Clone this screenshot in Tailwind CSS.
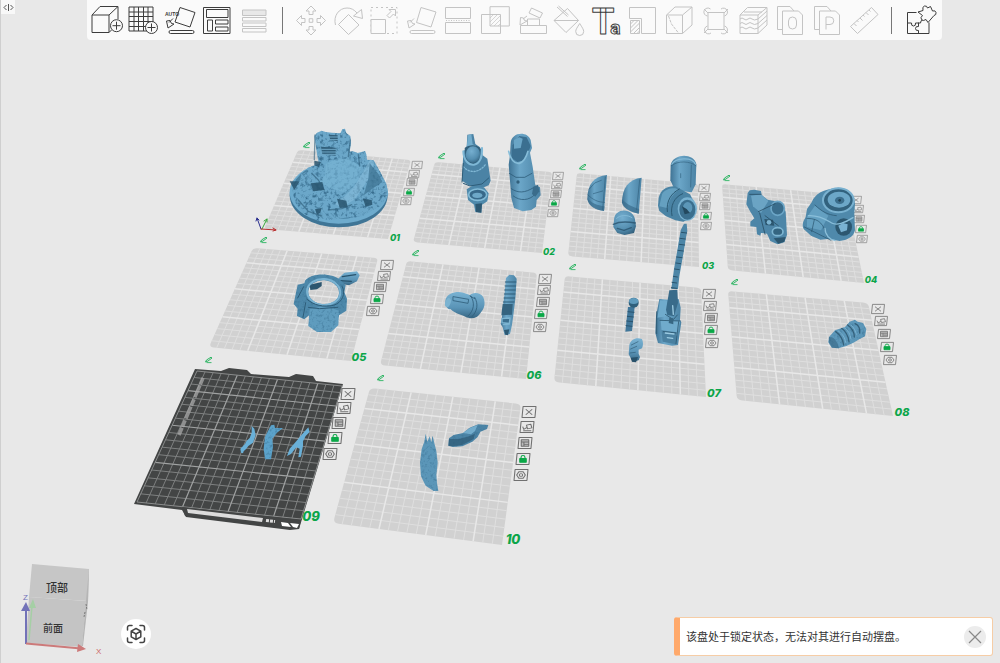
<!DOCTYPE html>
<html lang="zh-CN">
<head>
<meta charset="utf-8">
<meta name="viewport" content="width=device-width, initial-scale=1">
<title>构建板视图</title>
<script src="https://cdn.jsdelivr.net/npm/@tailwindcss/browser@4"></script>
</head>
<body class="font-['Noto_Sans','Noto_Sans_CJK_SC',sans-serif]">
<main class="relative flex min-h-screen flex-col overflow-hidden border-l border-[#cfcfcf] bg-[#e8e8e8]">

  <!-- 3D canvas -->
  <section id="scene" class="absolute inset-y-0 -left-px right-0" aria-label="3D 场景">
    <svg class="absolute left-0 top-0" width="1000" height="663" viewBox="0 0 1000 663" aria-hidden="true">
      <g id="plates"></g>
    </svg>
    <div id="plate-controls"></div>
    <svg class="pointer-events-none absolute left-0 top-0" width="1000" height="663" viewBox="0 0 1000 663" stroke-linejoin="round" stroke-linecap="round" aria-hidden="true">
      <defs>
        <linearGradient id="lr"><stop offset="0" stop-color="#3f7394"/><stop offset=".35" stop-color="#6ba6c8"/><stop offset="1" stop-color="#4b83a5"/></linearGradient>
        <linearGradient id="tb" x2="0" y2="1"><stop offset="0" stop-color="#79b2d2"/><stop offset=".6" stop-color="#5a94b7"/><stop offset="1" stop-color="#376683"/></linearGradient>
        <radialGradient id="ball" cx=".4" cy=".3" r=".8"><stop offset="0" stop-color="#76afd0"/><stop offset=".6" stop-color="#548eb0"/><stop offset="1" stop-color="#2f5b77"/></radialGradient>
        <filter id="rock" x="0" y="0" width="1" height="1" color-interpolation-filters="sRGB">
          <feTurbulence type="fractalNoise" baseFrequency=".09" numOctaves="3" seed="4"/>
          <feColorMatrix values="0 0 0 0 .22  0 0 0 0 .43  0 0 0 0 .56  3 0 0 0 -1.45"/>
          <feComposite in2="SourceGraphic" operator="in" result="n"/>
          <feMerge><feMergeNode in="SourceGraphic"/><feMergeNode in="n"/></feMerge>
        </filter>
        <filter id="grain" x="0" y="0" width="1" height="1" color-interpolation-filters="sRGB">
          <feTurbulence type="fractalNoise" baseFrequency=".12" numOctaves="2" seed="9"/>
          <feColorMatrix values="0 0 0 0 .22  0 0 0 0 .43  0 0 0 0 .56  1.600 0 0 0 -.8"/>
          <feComposite in2="SourceGraphic" operator="in" result="n"/>
          <feMerge><feMergeNode in="SourceGraphic"/><feMergeNode in="n"/></feMerge>
        </filter>
      </defs>

      <g transform="translate(205 120) scale(.33333)">
        <!-- scenic base -->
        <ellipse cx="401" cy="226" rx="147" ry="96" fill="#3f7596"/>
        <ellipse cx="401" cy="217" rx="147" ry="94" fill="#6eabcd"/>
        <ellipse cx="401" cy="211" rx="138" ry="86" fill="#477f9f"/>
        <g filter="url(#rock)">
          <path fill="#6ba7c9" d="M328 48l8-10 14-6 12 4 18 2 26 2 6-12 8-2 4 14 12 8 2 22-4 25 10-1 14 5 22-6 4 10 2 16 20 2 10 18 10 18 18 34 6 32-22 34-26 14-26 16-30 6-26 0-30 6-22 0-20-4-8 8-18-14-18-4-14-10-18-26-6-20-4-20 0-8 12-14 12-6 2-18 14-6 6-14 16-4 18-6-6-30z"/>
        </g>
        <path fill="#7ab5d5" d="M362 132l30-14 40 0 36 22-4 34-30 34-20 8-36-10-34-20 16-20z" opacity=".6"/>
        <path fill="#8bc0dc" d="M478 150l18-32 12 10-18 50-40 60-40 24-20-10 26-20 30-30z" opacity=".55"/>
        <path fill="#3f7493" d="M494 130l28 34 10 22-32 22-24 18 14-50z" opacity=".75"/>
        <path fill="#28536d" d="M372 44l26 2v18l-22-4zM348 80l44 3v24l-40-4zM328 122l20 4-6 16-14-6zM318 190l34-4 6 24-34 4zM396 236l28 6 4 20-24 2zM474 236l26 4 2 14-20 6zM254 184l30 0-16 26zM330 268l20-4-4 14-10 6z" opacity=".85"/>
        <path stroke="#6fa9c8" stroke-width="3" d="M350 88h44M350 96h44M351 103h42M366 51h34M367 59h31"/>
        <path stroke="#2d5c78" stroke-width="4" fill="none" d="M330 45l-2 74M436 60l-6 50M280 240l30 34 40 14M440 254l-30 12-40 4M460 104l4 34M320 160l20 20 18 30" opacity=".6"/>

        <!-- collar ring -->
        <path fill="url(#tb)" d="M398 478l20-20 38-4 8 12-8 18-24 12-22-4z"/>
        <path stroke="#28536d" stroke-width="4" fill="none" d="M412 470l40-6M405 482l34 2"/>
        <g filter="url(#grain)">
        <path fill="#4d88aa" fill-rule="evenodd" d="M300 482c20-26 86-24 108 0l14 14-4 20 8 20-2 36-22 14-6 20-80 0-4-20-14 12-22-10 2-22-12-14 6-30 6-28 20-4zM310 514a46 36 5 0 0 92 6a46 36 5 0 0-92-6z"/>
        <path fill="#5f9cbe" d="M314 568l30-8 36 4 22 8-2 44-22 20-42 0-26-18z"/>
        </g>
        <path fill="#2c566f" d="M314 494l36-8 0 12-14 10-20 2z"/>
        <ellipse cx="356" cy="516" rx="50" ry="39" stroke="#7ab3d2" stroke-width="6" fill="none" transform="rotate(5 356 516)"/>
        <path stroke="#2d5c78" stroke-width="3" fill="none" d="M296 500l-18 34M302 548l-8 44M412 500c10 20 2 46-26 56-30 6-60 0-80-18M310 562l34 4 54-4"/>
      </g>

      <g transform="translate(380 120) scale(.33333)">
        <!-- boots -->
        <path fill="#4b83a5" d="M262 44l18-2 6 30 14 10 8 24 14 10 10 66-6 14-20 8-24-2-16-6-20-14 4-86 10-16z"/>
        <path fill="#73adcd" d="M264 46l10-3 4 30 18 8-20 8-16-8z"/>
        <path fill="#315f7b" d="M254 84c14-12 42-10 48 4l-4 32-22 16-18-14z"/>
        <ellipse cx="279" cy="104" rx="22" ry="25" fill="url(#ball)"/>
        <path stroke="#7fb8d6" stroke-width="6" fill="none" d="M250 94c0 26 16 42 32 40s26-22 24-50"/>
        <path stroke="#80b7d4" stroke-width="4" fill="none" stroke-dasharray="4 5" d="M250 140c20 22 48 18 66-6"/>
        <path stroke="#2d5c78" stroke-width="3" fill="none" d="M250 190l20 8 36-6 20-18M250 130l-4 56"/>
        <path fill="#4f89ab" d="M260 208l16-10 36 4 14 18-4 24-16 10-2 24-18-2-4-22-18-14z"/>
        <ellipse cx="293" cy="224" rx="27" ry="17" fill="#38698a" stroke="#83bbd7" stroke-width="5"/>
        <ellipse cx="292" cy="226" rx="15" ry="8" fill="#6ea8c8"/>
        <path fill="#2d5872" d="M286 252l20-2-2 28-16-2z"/>
        <path fill="url(#lr)" d="M392 70c2-34 50-38 60-10l4 24-6 14 8 42 8 56 14 6 2 24-12 14-2 20-14 10-26 4-26-10-8-30-2-26-6-74 4-28z"/>
        <path fill="#3b6f90" d="M396 92l2-16 20-28 22 4 12 26-8 22-14 22-18 4-16-12z"/>
        <path fill="#6aa5c6" d="M402 60l16-8 10 4-6 28-20 2z"/>
        <path stroke="#86bdd9" stroke-width="5" fill="none" d="M386 94c6 24 18 38 32 36 14-4 22-22 26-36"/>
        <path stroke="#2d5c78" stroke-width="3" fill="none" d="M388 160l20 12 26 0 22-12M394 206c20 14 40 14 68-4M400 228c20 16 48 14 64-4" opacity=".8"/>
        <circle cx="414" cy="186" r="5" fill="#315f7b"/><path fill="#3a6c8b" d="M460 200l14-6 4 20-12 16-10-8z"/>

        <!-- forearm -->
        <path fill="url(#tb)" d="M196 548c-2-16 12-30 34-32 18 0 28 4 40 10 4-8 30-12 40 6 8 20 2 36-8 46-10 18-30 20-46 12-16-6-34-12-44-22-10 0-14-8-16-20z"/>
        <ellipse cx="204" cy="548" rx="8" ry="14" fill="#7bb3d1" transform="rotate(20 204 548)"/>
        <path stroke="#2d5c78" stroke-width="3" fill="none" d="M220 530l46 8-2 12-44-8zM272 528c14 20 10 44-8 60M284 532c12 20 8 42-8 58M270 528l14 8" opacity=".8"/>
        <!-- pistol grip -->
        <path fill="url(#lr)" d="M378 474l10-10 14 2 8 10-4 60-6 50-4 28-6 28-16 4-6-24-6-10 4-22 4-40 4-30z"/>
        <path stroke="#2d5c78" stroke-width="3" d="M376 486h32M375 498h32M374 510h32M373 522h32M372 534h32M370 546h32"/>
        <path fill="#34637f" d="M368 552h30l-2 32-32 2z"/><path stroke="#7db5d2" stroke-width="4" fill="#3b6f8f" d="M366 596l24-2-2 16-22-2zM370 614l18-2"/>
        <path fill="#2d5973" d="M372 630l16-2-4 18-8-2z"/>
      </g>

      <g transform="translate(550 145) scale(.33333)">
        <!-- half domes -->
        <path fill="url(#lr)" d="M171 90l-9 108c-16-2-46-12-50-36 0-44 20-68 59-72z"/>
        <path fill="#3a6c8b" d="M112 160c12 14 30 22 52 24l-2 14c-26-2-48-14-50-38z" opacity=".7"/>
        <path stroke="#2d5c78" stroke-width="3" fill="none" d="M118 132l16-18 20-8M130 146l28-8M114 150c14 14 30 22 50 22M166 96l-8 98" opacity=".6"/>
        <path fill="url(#lr)" d="M275 98l-9 108c-20-4-44-14-50-34 0-42 20-70 59-74z"/>
        <path fill="#3a6c8b" d="M216 162c14 16 30 24 52 30l-2 14c-20-4-46-14-50-32z" opacity=".7"/>
        <path stroke="#2d5c78" stroke-width="3" fill="none" d="M269 104l-9 90" opacity=".6"/>
        <!-- knee cap -->
        <path fill="url(#ball)" d="M192 226c0-40 62-40 64 4l2 14-6 20-28 6-22-6-12-18z"/>
        <path stroke="#2a546e" stroke-width="4" fill="none" d="M190 238c20-10 44-8 66-4M202 250l20 6 22-8" opacity=".8"/>
        <path stroke="#82b9d6" stroke-width="3" fill="none" d="M200 220c10-10 32-12 46-2"/>
        <!-- shoulder and arm -->
        <path fill="url(#lr)" d="M362 60c4-20 24-28 40-28s34 8 37 26l-2 60-12 24-50-6-14-30z"/>
        <path stroke="#82b9d6" stroke-width="4" fill="none" d="M366 58c8-20 62-24 70 0"/>
        <path stroke="#2d5c78" stroke-width="3" fill="none" d="M364 62c20-16 56-14 74 0M424 60l-2 66M392 86v12" opacity=".6"/>
        <path fill="#4a83a4" d="M326 158c6-26 28-36 50-34l44 24 18 34-6 34-32 14-24-4-28-12-20-16-4-16z"/>
        <path fill="#71accc" d="M336 148c10-20 42-22 50-14-20 14-32 36-32 56l-26-6z" opacity=".7"/>
        <path stroke="#2b5973" stroke-width="3" fill="none" d="M352 200c-4-32 12-56 36-68M366 212c-6-28 6-56 32-66"/>
        <ellipse cx="412" cy="192" rx="29" ry="35" fill="#79b2d1"/>
        <ellipse cx="412" cy="194" rx="24" ry="30" fill="#3b6f8e"/>
        <ellipse cx="413" cy="188" rx="14" ry="17" fill="#5c97b8"/><path fill="#23495f" d="M396 184l14 8 10 12-16 4z"/>
        <!-- thunder hammer -->
        <path fill="#4d86a7" d="M402 236h8l2 22-4 20-8 48-12 68-4 38-20 0 8-60 10-56 10-60z"/>
        <path stroke="#2a546d" stroke-width="3" d="M394 262l16 2M390 280l16 2M388 298l16 2M384 316l16 2M380 336l16 2M378 354l14 2M374 372l14 2M370 394l12 2M366 412l14 2M364 428l16 2"/>
        <path fill="url(#lr)" d="M328 462l28 2 30-2 6 26-2 36 4 8-10 68-18 2-42-8-8-30 2-50z"/>
        <path fill="#70abcc" d="M330 466l22 2-2 46-28 4 4-24zM332 526l58 2-8 44-46-4z"/>
        <path fill="#396b8a" d="M358 436l24-2 2 40-12 40-20-4-4-16z"/>
        <path fill="#4a80a0" d="M334 556l46 6-2 36-40-8z"/>
        <path stroke="#2a546d" stroke-width="3" fill="none" d="M320 500v66M330 526l60 2M386 530l-8 66M346 508l24 16 12-14M340 560l38 4" opacity=".8"/>
        <path stroke="#9ccbe2" stroke-width="4" d="M368 482l2 26M346 564l26 3M352 578l16 2"/>
        <path fill="#376783" d="M358 518l12 2v18l-14-4z"/>
        <!-- handle -->
        <path fill="#41779a" d="M234 486h20l-8 72-20 2z"/>
        <path stroke="#2a546d" stroke-width="3" d="M234 500l18 2M232 514l18 2M230 528l18 2M228 542l18 2"/>
        <ellipse cx="251" cy="473" rx="15" ry="15" fill="#30607c"/><ellipse cx="251" cy="468" rx="14" ry="9" fill="#5f9bbd"/>
        <!-- hand -->
        <path fill="url(#tb)" d="M238 600c4-18 22-24 38-18 4 10 4 18 0 28l-10 4 0 12 4 10-4 10-18 4-12-22z"/>
        <path stroke="#2a546d" stroke-width="3" fill="none" d="M244 600l20-10M242 612l18-8M240 624l16-2" opacity=".6"/>
        <path fill="#28516a" d="M242 638l22-2-6 16-12-2z"/>
      </g>

      <g transform="translate(715 165) scale(.33333)">
        <!-- chest cannon -->
        <path fill="#4d86a8" d="M98 84l6-8 14-2 20 4 2 12 18 14 20 4 22 8 12 24 4 70-8 22-20 6-22-10-10-22-18-2-2 8-10-4-2-22-18-2v-14l12-10-12-20-12-22z"/>
        <path fill="#75aecd" d="M108 92l30-4 22 20-22 36-24-20z" opacity=".75"/>
        <ellipse cx="188" cy="130" rx="20" ry="21" fill="#3a6d8c" stroke="#6ca6c7" stroke-width="5"/>
        <ellipse cx="188" cy="200" rx="16" ry="12" fill="#346581" stroke="#7db5d2" stroke-width="5"/>
        <path fill="#2c5770" d="M176 220l36-4-4 14-18 6zM148 162l26 2 4 18-26-2z"/>
        <path stroke="#24495e" stroke-width="3" fill="none" d="M104 88l34 0M130 140l50-24M134 144l16 64M150 152l40 30" opacity=".75"/>
        <circle cx="162" cy="172" r="7" fill="#7bb3d1"/>
        <!-- torso -->
        <path fill="#4f89ab" d="M290 112c10-26 34-40 80-44 30 0 48 22 50 48l-2 30 2 50c-4 20-24 30-46 32l-34-6-24 2-28-12-22-20c-6-12-2-22 6-36l4-24z"/>
        <path fill="#6ea9ca" d="M276 156l24-34 40 30-22 44-42-10z" opacity=".7"/>
        <ellipse cx="370" cy="106" rx="46" ry="36" fill="#32627e" stroke="#79b1d0" stroke-width="6"/>
        <ellipse cx="372" cy="104" rx="34" ry="24" fill="#6ca7c8"/><ellipse cx="374" cy="106" rx="14" ry="11" fill="#3b6e8d"/><circle cx="374" cy="106" r="4" fill="#1f4256"/>
        <ellipse cx="386" cy="186" rx="25" ry="26" fill="#2c5770"/><path fill="#79b2d2" d="M370 182l14-8 14 4-2 18-18 6z"/>
        <path stroke="#2a546e" stroke-width="3" fill="none" d="M276 160c40 0 50 20 60 54M268 186l60 30 20 10M300 120c20 20 40 30 64 32M290 200l8-36" opacity=".7"/>
        <path stroke="#8abfda" stroke-width="4" fill="none" d="M280 152c36-2 56 14 70 22s40 0 64-16M330 190c0 20 14 34 30 36"/>
        <!-- greave -->
        <g filter="url(#grain)"><path fill="#5c97b9" d="M342 516l18-20 30-10 14-16 16-6 8 6 16 4 10 18-4 22-16 8-20 12-22 10-22 6-20-2-10-16z"/></g>
        <path fill="#376883" d="M342 516c12-2 26 12 30 34l-20-2-10-16z" opacity=".6"/>
        <path stroke="#24495f" stroke-width="4" fill="none" d="M362 500c14 10 22 26 24 40M380 490c14 10 20 26 22 40M398 480c14 10 20 26 20 36M420 476c12 4 16 18 14 28" opacity=".7"/>
        <path stroke="#86bcd8" stroke-width="3" fill="none" d="M370 498c12 8 20 20 22 34M388 488c12 8 18 20 20 34M408 480c10 8 14 20 16 28" opacity=".7"/>
      </g>

      <!-- shards on the active plate -->
      <g transform="translate(125 350) scale(.33333)">
        <path fill="#69b0d8" d="M380 228l8 8 4 20-8 22-14 10-6 8-8 8-2 6-6-2-2-12 14-14 4-8 10-10 6-16z"/>
        <path fill="#69b0d8" d="M550 232l4 14-12 12-8 16 0 14-6 32-8 2 4-26-10-4-16 20-12 6 8-22 16-18 22-26z"/>
        <g filter="url(#grain)"><path fill="#5ba2ca" d="M438 226l10-2 2 10 24 0-18 14-14 18 2 24-6 38-18 0-4-32 4-36z"/></g>
      </g>
      <g transform="translate(325 365) scale(.33333)">
        <g filter="url(#grain)">
          <path fill="#5b96b8" d="M302 206l5 24 7-16 5 18 4-20 5 22 6 24 4 36-4 36 2 24 4 24-14 0-24-16-14-28-3-40 5-42 8-22z"/>
          <path fill="#4b84a6" d="M372 220l14-10 28-6 20-16 26-10 30 2-4 12-20 8-8 16-16 14-30 14-28 2-14-4z"/>
        </g>
        <path fill="#28526c" d="M372 222l30 0 30-8 18-8-4 16-34 18-30 4-12-2z" opacity=".6"/>
        <path fill="#7db7d6" d="M414 204l22-16 22-8-8 18-12 10z" opacity=".8"/>
      </g>

      <!-- origin axes -->
      <g fill="none" stroke-width="1"><path stroke="#2b2f8f" d="M261 229l-4-11m-1 3l1-3 2 2"/><path stroke="#37a53a" d="M262 229l5-10m-3 2l3-2 0 3"/><path stroke="#b92d2d" d="M261 229l15 1m-3-2l3 2-3 1"/></g>
    </svg>
  </section>

  <!-- Sidebar handle -->
  <button class="absolute left-0 top-0 flex h-3.5 w-3.5 items-center justify-center bg-[#f8f8f8] text-[#555]" aria-label="展开侧栏">
    <svg width="11" height="9" viewBox="0 0 11 9" fill="none" stroke="currentColor"><path d="M3.500 2L1 4.500 3.500 7M5.500 1v7M7.500 2L10 4.500 7.500 7"/></svg>
  </button>

  <!-- Toolbar -->
  <header class="relative ml-[86px] w-full max-w-[855px]">
    <nav id="toolbar" class="flex h-[40px] items-center justify-between rounded-b-sm bg-[#fafafa] pl-[3px] pr-[5px]" aria-label="工具栏"></nav>
  </header>

  <!-- Bottom row -->
  <footer class="relative mt-auto flex items-end justify-between pb-[7px] pr-[7px]">
    <div class="flex items-end gap-1">
      <svg class="-mb-1 ml-4" width="100" height="100" viewBox="17 560 100 100" role="img" aria-label="视图方向">
        <path fill="#c6c6c6" d="M32 564l57 5-1 32-59-4z"/><path fill="#c4c4c4" d="M29 597l57 4-4 46-56-4z"/><path fill="#b5b5b5" d="M89 569l-1 33-5 44-1 0 4-46z"/>
        <path stroke="#777" stroke-width="1" fill="none" d="M86 604l1 6M85 612l-1 5" stroke-dasharray="2 1"/>
        <g fill="#333" font-family="Noto Sans CJK SC, sans-serif" font-size="11" font-weight="500">
          <text x="46" y="592">顶部</text><text x="43" y="632" font-size="10">前面</text>
        </g>
        <path stroke="#a5cfa5" stroke-width="1.500" d="M29 640l3-34"/><path fill="#a5cfa5" d="M29 608l4-9 3 9z"/>
        <path stroke="#7272b8" stroke-width="2" d="M26 644v-36"/><path fill="#7272b8" d="M21 611l5-9 4 9z"/>
        <path stroke="#cc7a7a" stroke-width="2" d="M26 643.500l55 5"/><path fill="#cc7a7a" d="M78 644l8 5-9 3z"/>
        <text x="23" y="600" font-family="Liberation Sans" font-size="8" fill="#7272b8">Z</text>
        <text x="96" y="654" font-family="Liberation Sans" font-size="8" fill="#cc6666">X</text>
      </svg>
      <button class="mb-[7px] flex size-[30px] items-center justify-center rounded-full bg-white text-[#444]" aria-label="重置视角">
        <svg width="20" height="20" viewBox="0 0 20 20" fill="none" stroke="currentColor" stroke-width="1.500" stroke-linejoin="round" stroke-linecap="round"><path d="M1.500 6V3.500a2 2 0 012-2H6M14 1.500h2.500a2 2 0 012 2V6M18.500 14v2.500a2 2 0 01-2 2H14M6 18.500H3.500a2 2 0 01-2-2V14M10 4.500l4.800 2.700v5.600L10 15.500l-4.800-2.700V7.200zM5.200 7.200L10 10l4.800-2.800M10 10v5.500"/></svg>
      </button>
    </div>
    <div role="alert" class="flex h-[39px] w-[319px] items-center justify-between rounded-[3px] border border-l-[6px] border-[#f6cda6] border-l-[#ffa96b] bg-white px-1.5">
      <p class="text-[11px] leading-4 whitespace-nowrap text-[#333]">该盘处于锁定状态，无法对其进行自动摆盘。</p>
      <button class="flex size-[22px] items-center justify-center rounded-full bg-[#ececec] text-[#888]" aria-label="关闭">
        <svg width="14" height="14" viewBox="0 0 14 14" stroke="currentColor" stroke-width="1.200"><path d="M1 1l12 12M13 1L1 13"/></svg>
      </button>
    </div>
  </footer>
</main>

<script>
const HATCH = '<path stroke-width=".7" d="M12 15l4-4M12 19l8-8M12 23l11-11M16 23l7-7M20 23l3-3"/>';
// [label, state, drawing]
const tools = [
  ['添加', 1, '<path d="M2 12h17v17.500H2zM2 12l8-8.500h18L19 12M28 3.500V16M19 29.500l2.500-2.500"/><circle cx="26.500" cy="22.700" r="6" fill="#fafafa"/><path d="M22.500 22.700h8M26.500 18.700v8"/>'],
  ['添加盘', 1, '<path d="M3 4h24v24H3zM8 4v24M12.500 4v24M17.500 4v24M22 4v24M3 9h24M3 13.500h24M3 18.500h24M3 23.500h24"/><circle cx="25.500" cy="24.500" r="6" fill="#fafafa"/><path d="M21.500 24.500h8M25.500 20.500v8"/>'],
  ['自动朝向', 1, '<path d="M17 4.500l15 5-5 14.500-15-5zM10 15.500l-4 4M3.500 18l1.500 7 6-4-2.500-.500-1.500-3z"/><rect x="6" y="27.500" width="25" height="3" rx="1.500"/><text x="2" y="12.500" font-family="Liberation Sans" font-size="5" font-weight="700" fill="currentColor" stroke="none">AUTO</text>'],
  ['自动摆盘', 1, '<path d="M3.500 4.500h26.500v26H3.500zM6.500 6.500h21.500v8H6.500zM7.500 17h5v11h-5zM15.500 17h12.500v4H15.500zM15.500 24h12.500v4H15.500z"/>'],
  ['拆分', 0, '<path fill="#e8e8e8" d="M5.500 7h23.500v5.500H5.500z"/><path d="M5.500 14.500h23.500v3.500H5.500zM5.500 20h23.500v3.500H5.500zM5.500 25.500h23.500V29H5.500z"/>'],
  null,
  ['移动', 0, '<path d="M17 3l5 5h-3v3.500h-4V8h-3zM17 32l5-5h-3v-3.500h-4V27h-3zM2.500 17.500l5-5v3H11v4H7.500v3zM31.500 17.500l-5-5v3H23v4h3.500v3zM15.200 15.700h3.600v3.600h-3.600z"/>'],
  ['旋转', 0, '<path d="M17.500 11.500L28 22 17.500 31.500 7.500 21.500zM4.500 22C2 13 8 5 16 5c4 0 7 1.500 10 5M30.500 6.500l1 9-9-2.500z"/>'],
  ['缩放', 0, '<path stroke-dasharray="2 3" d="M4 4.500h26v26H4z"/><path fill="#fafafa" d="M4 16.500h14.500v14H4z"/><path d="M20 12.500l4-4-2-2h6.500v6.500l-2-2-4 4z"/>'],
  ['选择底面', 0, '<path d="M17 4.500l15 4.500-5 15-14.500-4.500zM10 15.500l-4 4M3.500 18l1.500 7 6-4-2.500-.500-1.500-3z"/><rect x="6" y="27.500" width="25" height="3" rx="1.500"/>'],
  ['切割', 0, '<path d="M4.500 4.500h25v11h-25zM4.500 19.500h25v11h-25z"/><path stroke-width="1.200" stroke-dasharray="1 1.500" d="M5 17.500h25"/>'],
  ['布尔运算', 0, '<path d="M12 3.700h19.300V23H12zM3.500 11.500h19v19h-19z"/>' + HATCH],
  ['支撑', 0, '<path d="M5.500 22.500h26v8h-26zM12.500 16h12v6.500h-12zM16.500 5l11 5-2.500 5-11-5zM12 13l-4 3M5.500 14.500L5 22l7-4-2.500-.500-1-2.500z"/>'],
  ['上色', 0, '<path d="M15.500 5.500l11 12-12.500 12L2 17.500zM2 17.500h24.500M5 4l10.500 9.500M6.500 3l10 9M27.700 20.500c2.500 4 4 6 4 8a4 4 0 01-8 0c0-2 1.500-4 4-8z"/>'],
  ['文字', 1, '<text y="30.500" font-family="Roboto" font-weight="700" font-size="36" stroke-width="1"><tspan x="3">T</tspan><tspan dx="-4" font-size="19">a</tspan></text>'],
  ['可变层高', 0, '<path d="M4.500 4.500h26v26h-14v-15h-12zM5.500 17.500h9v13h-9zM5.500 21l3.500-3.500M5.500 25l7.500-7.500M5.500 29l9-9M8.500 30.500l6-6M12 30.500l2.500-2.500"/>'],
  ['接缝', 0, '<path d="M4.500 12h16v18.500h-16zM4.500 12L13 4h17l-9.500 8M30 4v18l-9.500 8.500"/><path stroke-dasharray="3 1" d="M6.500 13l3 8 7 9"/>'],
  ['包围', 0, '<path d="M9 9.500h16v17H9z"/><path d="M8.500 13a4 4 0 113-7M22 6a4 4 0 113.500 7M25.500 23a4 4 0 11-3.500 7M12 30a4 4 0 11-3.500-7M5 6l4 4M29 6l-4 4M29 30l-4-4M5 30l4-4"/>'],
  ['模糊外壳', 0, '<path d="M4 12h18v18.500H4zM4 12l7.500-7.500H31L22 12M31 4.500V22l-9 8.500M4 16q2-2 4 0t4 0 4 0 6 0l9-8M4 20.500q2-2 4 0t4 0 4 0 6 0l9-8M4 25q2-2 4 0t4 0 4 0 6 0l9-8M8 9h18"/>'],
  ['对象', 0, '<path d="M9.500 26.500h-5v-23H17l4 4.500M9.500 8h16l4 4v19.500h-20z"/><rect x="15.500" y="14" width="8" height="12" rx="4"/>'],
  ['参数', 0, '<path d="M9.500 26.500h-5v-23H17l4 4.500M9.500 8h16l4 4v19.500h-20zM16 26.500V14h4a3.500 3.500 0 010 7.500h-4"/>'],
  ['测量', 0, '<path d="M24.500 4.500l6.500 7-20.500 19-7-7zM7 20.500l2.500 2.500M10 17.500l1.500 1.500M13 15l2.500 2.500M16 12l1.500 1.500M19 9.500l2.500 2.500M22 7l1.500 1.500"/>'],
  null,
  ['装配', 1, '<path d="M13.500 9.500H4.500v21H26V19.500M4.500 20h4q-.500 3 2 3t2-3h3M15.500 30.500v-3q-3 .500-3-2t3-2v-4M15.500 20h2q0-3 2.500-3"/><path fill="#fafafa" d="M15 9l5-1.500q-1-4 1.500-4.500t3 2l3-1.500 2 4.500q3-1 3.500 1.500t-2 3l-6 7-2-3q-3 2-4.500 0t1-4z"/>'],
];
document.getElementById('toolbar').innerHTML = tools.map(t => t
  ? `<button aria-label="${t[0]}" class="flex w-[33px] shrink-0 justify-center ${t[1] ? 'text-[#3c3c3c]' : 'text-[#c4c4c4]'}"><svg class="shrink-0 overflow-visible" width="34" height="34" viewBox="0 0 34 34" fill="none" stroke="currentColor" stroke-width="1" stroke-linejoin="round">${t[2]}</svg></button>`
  : '<span class="flex w-4 shrink-0 justify-center"><i class="h-[27px] w-px bg-[#777]"></i></span>').join('');

// Plates: corners TL TR BR BL, edit pen, label, and centres of the first and last side button
const plates = [
  {q:[298,150,411,160,388,239,264,229], pen:[307,145], at:[395,237], b:[417,165,406,201], s:0},
  {q:[435,162,552,172,542,253,413,242], pen:[442,156], at:[549,251], b:[558,176,553,213], s:0},
  {q:[577,173,698,184,699,267,568,256], pen:[583,167], at:[708,265], b:[704,188,706,226], s:0},
  {q:[722,184,846,195,864,283,728,270], pen:[727,178], at:[871,279], b:[856,200,862,239], s:0},
  {q:[253,248,378,258,351,361,209,347], pen:[264,240], at:[359,357], b:[387,265,373,311], s:1},
  {q:[407,261,537,273,526,379,380,365], pen:[416,253], at:[534,375], b:[545,279,540,327], s:1},
  {q:[565,276,701,288,706,397,554,382], pen:[573,267], at:[714,393], b:[709,294,712,343], s:1},
  {q:[728,291,868,303,893,416,737,400], pen:[735,282], at:[902,412], b:[878,309,890,360], s:1},
  {q:[197,371,342,386,301,519,137,502], pen:[209,360], at:[311,516], b:[348,394,330,454], s:2, dark:1},
  {q:[370,388,521,404,502,545,333,523], pen:[381,378], at:[513,539], b:[529,412,521,475], s:2},
];

// Perspective map from the unit square onto a quad
function mapper([x0,y0,x1,y1,x2,y2,x3,y3]) {
  const dx1=x1-x2, dx2=x3-x2, sx=x0-x1+x2-x3, dy1=y1-y2, dy2=y3-y2, sy=y0-y1+y2-y3;
  const d=dx1*dy2-dx2*dy1, g=(sx*dy2-dx2*sy)/d, h=(dx1*sy-sx*dy1)/d;
  const a=x1-x0+g*x1, b=x3-x0+h*x3, c=y1-y0+g*y1, e=y3-y0+h*y3;
  return (u,v) => { const w=g*u+h*v+1; return ((a*u+b*v+x0)/w).toFixed(2)+' '+((c*u+e*v+y0)/w).toFixed(2); };
}
let art = '';
for (const p of plates) {
  const m = mapper(p.q), N = 18;
  let thin = '', thick = '';
  for (let i = 1; i < N; i++) {
    const v = `M${m(i/N,0)}L${m(i/N,1)}`, h = `M${m(0,i/N)}L${m(1,i/N)}`;
    if (i % 5) thin += v; else thick += v;
    if ((N-i) % 5) thin += h; else thick += h;
  }
  if (p.dark) {
    art += `<path fill="#434545" d="M195 369l26 2 8-3 18 2 4 4 38 3 7-3 17 2 3 5 27 3-44 145-9 1-104-13-4-7-48-6z"/>
      <path fill="none" stroke="#7e8080" stroke-width="1" d="${thin}"/><path fill="none" stroke="#a0a2a2" stroke-width="1.200" d="${thick}"/><path fill="none" stroke="#8a8c8c" d="M${m(0,0)}L${m(1,0)}L${m(1,1)}L${m(0,1)}z"/>
      <path stroke="#a8a8a8" stroke-width="3.500" stroke-dasharray="7 1 13 2" opacity=".75" d="M203 378L179 435"/>
      <path fill="#434545" d="M182 507l119 13-2 9-114-13z"/>
      <path fill="#dcdcdc" d="M187 509l76 9-1 4-74-9z"/><path fill="#fff" d="M281 522l7 1 3 4-9-1zM290 523l9 1-2 4-4-1z"/>
      <path stroke="#ddd" stroke-width="3" stroke-dasharray="3 1" d="M266 520.500l9 1"/>`;
  } else {
    const r = .035;
    art += `<path fill="#d1d1d1" d="M${m(r,0)}L${m(1-r,0)}Q${m(1,0)} ${m(1,r)}L${m(1,1)}L${m(r,1)}Q${m(0,1)} ${m(0,1-r)}L${m(0,r)}Q${m(0,0)} ${m(r,0)}z"/>
      <path fill="none" stroke="#dfdfdf" stroke-width="1" d="${thin}"/><path fill="none" stroke="#e8e8e8" stroke-width="1.500" d="${thick}"/>`;
  }
}
document.getElementById('plates').innerHTML = art;

const marks = [
  ['删除盘', '<path d="M3.500 3.500l6 6M9.500 3.500l-6 6"/>'],
  ['自动朝向盘', '<path d="M6 4.500l4-1 1 4-4 1zM2.500 6l1 3 3-2M3 10.500h7.500"/>'],
  ['自动摆盘', '<path fill="#bbb" d="M3 3h7v7H3zM3 5.500h7M5.500 5.500V10M6 8h4"/>'],
  ['锁定盘', '<g stroke="#0aa847"><path fill="#0aa847" d="M3.500 6h6v4h-6z"/><path d="M4.700 6V4.500a1.800 1.800 0 013.600 0V6"/></g>'],
  ['盘设置', '<path d="M4.500 3h4l2 3.500-2 3.500h-4l-2-3.500z"/><circle cx="6.500" cy="6.500" r="1.500"/>'],
];
const box = ['h-[8px] w-[11px]', 'h-[10px] w-[13px]', 'h-[12px] w-[14px]'];
const label = ['text-[9px]', 'text-[11px]', 'text-[13px]'];
const ink = ['text-[#888]', 'text-[#7c7c7c]', 'text-[#707070]'];
document.getElementById('plate-controls').innerHTML = plates.map((p, n) => {
  const id = String(n + 1).padStart(2, '0');
  const [x0, y0, x1, y1] = p.b;
  const side = marks.map((k, i) => {
    const t = i / 4, x = Math.round(x0 + (x1 - x0) * t), y = Math.round(y0 + (y1 - y0) * (t * .94 + t * t * .06));
    return `<button aria-label="${k[0]} ${id}" class="absolute -translate-x-1/2 -translate-y-1/2 ${box[p.s]} ${ink[p.s]}" style="left:${x}px;top:${y}px"><svg class="block size-full overflow-visible" viewBox="0 0 13 13" preserveAspectRatio="none" fill="none" stroke="currentColor" stroke-linejoin="round"><path fill="#e8e8e8" d="M1 .500h12l-1 12H0z"/>${k[1]}</svg></button>`;
  }).join('');
  return `<button aria-label="重命名 ${id}" class="absolute -translate-x-1/2 -translate-y-1/2 text-[#2fb564]" style="left:${p.pen[0]}px;top:${p.pen[1]}px"><svg class="block" width="9" height="7" viewBox="0 0 9 7" fill="none" stroke="currentColor" stroke-linejoin="round"><path d="M1 5.500L2 3.500 6.500.700 7.500 1.500 3.500 4.500zM2 6.200h5"/></svg></button>
    ${side}<span class="absolute -translate-x-1/2 -translate-y-1/2 font-['Inter',sans-serif] font-extrabold italic leading-none text-[#0ca549] ${label[p.s]}" style="left:${p.at[0]}px;top:${p.at[1]}px">${id}</span>`;
}).join('');
</script>
</body>
</html>
